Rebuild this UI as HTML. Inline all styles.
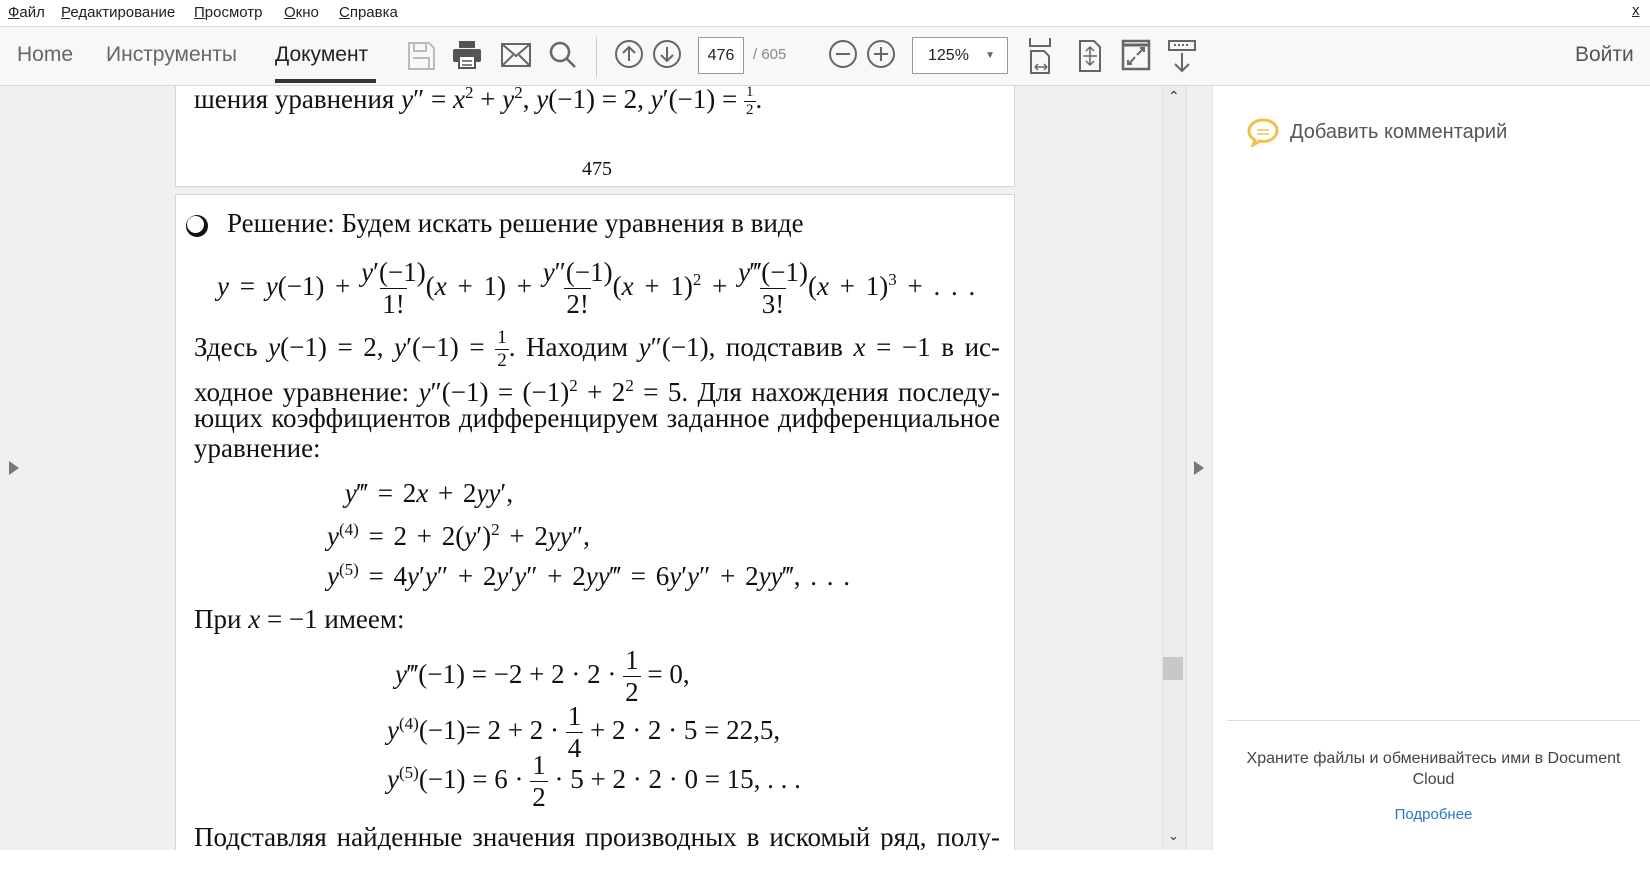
<!DOCTYPE html>
<html><head><meta charset="utf-8"><style>
*{margin:0;padding:0;box-sizing:border-box}
body{width:1650px;height:886px;position:relative;overflow:hidden;background:#fff;font-family:"Liberation Sans",sans-serif}
.a{position:absolute;white-space:nowrap}
.menu span{position:absolute;top:4px;font-size:15px;color:#222}
.menu span::first-letter{text-decoration:underline}
.tb{position:absolute;top:26px;left:0;width:1650px;height:60px;background:#f8f8f8;border-top:1px solid #d8d8d8;border-bottom:1px solid #d8d8d8}
.tab{position:absolute;top:16px;font-size:21px;color:#666}
.doc{position:absolute;top:86px;left:0;width:1212px;height:764px;background:#f0f0f0;overflow:hidden}
.page{position:absolute;left:175px;width:840px;background:#fff;border:1px solid #d4d4d4}
.t{position:absolute;font-family:"Liberation Serif",serif;font-size:27px;color:#111;white-space:nowrap;line-height:27px}
.w{word-spacing:4px}
.w3{word-spacing:3px}
i{font-style:italic}
.j{width:806px;text-align:justify;text-align-last:justify}
.fr{display:inline-flex;flex-direction:column;align-items:center;vertical-align:middle;line-height:1.15;word-spacing:0}
.fr>span:last-child{border-top:1.3px solid #111;padding:0 2px}
sup{font-size:17px;vertical-align:10px}
.sm{font-size:15px}
</style></head><body>
<div class="menu">
<span style="left:8px">Файл</span><span style="left:61px">Редактирование</span><span style="left:194px">Просмотр</span><span style="left:284px">Окно</span><span style="left:339px">Справка</span>
<span style="left:1632px;top:2px">x</span>
</div>
<div class="tb">
<span class="tab" style="left:17px">Home</span>
<span class="tab" style="left:106px">Инструменты</span>
<span class="tab" style="left:275px;color:#222">Документ</span>
<div class="a" style="left:275px;top:52px;width:101px;height:4px;background:#333"></div>
<svg class="a" style="left:405px;top:14px" width="32" height="30" viewBox="0 0 32 30" fill="none" stroke="#bbb" stroke-width="2"><path d="M4 2h20l5 5v21H4z"/><path d="M9 2v8h12V2M8 17h16v11"/></svg>
<svg class="a" style="left:451px;top:13px" width="32" height="30" viewBox="0 0 32 30" fill="#555"><rect x="8" y="1" width="16" height="7"/><rect x="2" y="9" width="28" height="13" rx="2"/><rect x="8" y="16" width="16" height="12" fill="#fff" stroke="#555" stroke-width="2"/><path d="M11 21h10M11 25h10" stroke="#555" stroke-width="1.5"/></svg>
<svg class="a" style="left:500px;top:15px" width="32" height="26" viewBox="0 0 32 26" fill="none" stroke="#666" stroke-width="2"><rect x="2" y="2" width="28" height="22"/><path d="M2 2l14 12 14-12M2 24l11-11M30 24L19 13"/></svg>
<svg class="a" style="left:548px;top:13px" width="30" height="30" viewBox="0 0 30 30" fill="none" stroke="#666" stroke-width="2.5"><circle cx="12" cy="12" r="9"/><path d="M19 19l8 8"/></svg>
<div class="a" style="left:596px;top:10px;width:1px;height:40px;background:#ccc"></div>
<svg class="a" style="left:614px;top:12px" width="30" height="30" viewBox="0 0 30 30" fill="none" stroke="#666" stroke-width="2"><circle cx="15" cy="15" r="13"/><path d="M15 22V8M9 14l6-6 6 6"/></svg>
<svg class="a" style="left:652px;top:12px" width="30" height="30" viewBox="0 0 30 30" fill="none" stroke="#666" stroke-width="2"><circle cx="15" cy="15" r="13"/><path d="M15 8v14M9 16l6 6 6-6"/></svg>
<div class="a" style="left:698px;top:10px;width:46px;height:37px;background:#fff;border:1px solid #999;font-size:16px;text-align:center;line-height:35px;color:#222">476</div>
<span class="a" style="left:753px;top:19px;font-size:15px;color:#888">/ 605</span>
<svg class="a" style="left:828px;top:12px" width="30" height="30" viewBox="0 0 30 30" fill="none" stroke="#666" stroke-width="2"><circle cx="15" cy="15" r="13"/><path d="M8 15h14"/></svg>
<svg class="a" style="left:866px;top:12px" width="30" height="30" viewBox="0 0 30 30" fill="none" stroke="#666" stroke-width="2"><circle cx="15" cy="15" r="13"/><path d="M8 15h14M15 8v14"/></svg>
<div class="a" style="left:912px;top:10px;width:96px;height:37px;background:#fff;border:1px solid #999;font-size:16px;line-height:35px;padding-left:15px;color:#222">125%<span style="position:absolute;right:12px;font-size:10px;color:#666">▼</span></div>
<svg class="a" style="left:1027px;top:10px" width="28" height="38" viewBox="0 0 28 38" fill="none" stroke="#666" stroke-width="2"><path d="M3 1v8h20V1M4 14h13l5 5v17H4z"/><path d="M8 30h12M8 30l3-3M8 30l3 3M20 30l-3-3M20 30l-3 3" stroke-width="1.5"/></svg>
<svg class="a" style="left:1078px;top:12px" width="24" height="34" viewBox="0 0 24 34" fill="none" stroke="#666" stroke-width="2"><path d="M2 2h14l6 6v24H2z"/><path d="M12 8v18M8 12l4-4 4 4M8 22l4 4 4-4M5 17h14" stroke-width="1.5"/></svg>
<svg class="a" style="left:1121px;top:12px" width="30" height="32" viewBox="0 0 30 32" fill="none" stroke="#666" stroke-width="2.5"><rect x="2" y="2" width="26" height="28"/><path d="M2 6h26" stroke-width="3"/><path d="M16 16l7-7M19 9h4v4M14 18l-6 7M7 21v4h4" stroke-width="2"/></svg>
<svg class="a" style="left:1167px;top:12px" width="30" height="34" viewBox="0 0 30 34" fill="none" stroke="#666" stroke-width="2"><rect x="2" y="2" width="26" height="9"/><path d="M7 6h2M11 6h2M15 6h2M19 6h2" stroke-width="2"/><path d="M15 14v18M8 25l7 7 7-7"/></svg>
<span class="tab" style="left:1575px;color:#555">Войти</span>
</div>

<div class="doc">
<svg class="a" style="left:9px;top:375px" width="10" height="14"><path d="M0 0l10 7-10 7z" fill="#777"/></svg>
<div class="page" style="top:-10px;height:111px">
<div class="t" style="left:18px;top:2px">шения уравнения <i>y</i>″ = <i>x</i><sup>2</sup> + <i>y</i><sup>2</sup>, <i>y</i>(−1) = 2, <i>y</i>′(−1) = <span class="fr sm"><span>1</span><span>2</span></span>.</div>
<div class="t" style="left:406px;top:79px;font-size:20px">475</div>
</div>
<div class="page" style="top:108px;height:700px">
<svg class="a" style="left:9px;top:19px" width="24" height="24"><circle cx="12" cy="12" r="11" fill="#111"/><circle cx="10.5" cy="10.5" r="8.5" fill="#fff"/></svg>
<div class="t" style="left:51px;top:15px">Решение: Будем искать решение уравнения в виде</div>
<div class="t w" style="left:41px;top:62px;line-height:30px"><i>y</i> = <i>y</i>(−1) + <span class="fr"><span><i>y</i>′(−1)</span><span>1!</span></span>(<i>x</i> + 1) + <span class="fr"><span><i>y</i>″(−1)</span><span>2!</span></span>(<i>x</i> + 1)<sup>2</sup> + <span class="fr"><span><i>y</i>‴(−1)</span><span>3!</span></span>(<i>x</i> + 1)<sup>3</sup> + . . .</div>
<div class="t j" style="left:18px;top:132px;line-height:40px;height:50px">Здесь <i>y</i>(−1) = 2, <i>y</i>′(−1) = <span class="fr" style="font-size:19px"><span>1</span><span>2</span></span>. Находим <i>y</i>″(−1), подставив <i>x</i> = −1 в ис-</div>
<div class="t j" style="left:18px;top:177px">ходное уравнение: <i>y</i>″(−1) = (−1)<sup>2</sup> + 2<sup>2</sup> = 5. Для нахождения последу-</div>
<div class="t j" style="left:18px;top:210px">ющих коэффициентов дифференцируем заданное дифференциальное</div>
<div class="t" style="left:18px;top:240px">уравнение:</div>
<div class="t w3" style="left:159px;top:285px">&nbsp;<i>y</i>‴ = 2<i>x</i> + 2<i>yy</i>′,</div>
<div class="t w3" style="left:151px;top:321px"><i>y</i><sup>(4)</sup> = 2 + 2(<i>y</i>′)<sup>2</sup> + 2<i>yy</i>″,</div>
<div class="t w3" style="left:151px;top:361px"><i>y</i><sup>(5)</sup> = 4<i>y</i>′<i>y</i>″ + 2<i>y</i>′<i>y</i>″ + 2<i>yy</i>‴ = 6<i>y</i>′<i>y</i>″ + 2<i>yy</i>‴, . . .</div>
<div class="t" style="left:18px;top:411px">При <i>x</i> = −1 имеем:</div>
<div class="t" style="left:219px;top:450px;line-height:50px"><i>y</i>‴(−1) = −2 + 2 · 2 · <span class="fr"><span>1</span><span>2</span></span> = 0,</div>
<div class="t" style="left:211px;top:504px;line-height:50px"><i>y</i><sup>(4)</sup>(−1)= 2 + 2 · <span class="fr"><span>1</span><span>4</span></span> + 2 · 2 · 5 = 22,5,</div>
<div class="t" style="left:211px;top:553px;line-height:50px"><i>y</i><sup>(5)</sup>(−1) = 6 · <span class="fr"><span>1</span><span>2</span></span> · 5 + 2 · 2 · 0 = 15, . . .</div>
<div class="t j" style="left:18px;top:629px">Подставляя найденные значения производных в искомый ряд, полу-</div>
</div>
<div class="a" style="left:1162px;top:0;width:24px;height:764px;background:#ececec;border-left:1px solid #e2e2e2"></div>
<div class="a" style="left:1168px;top:2px;font-size:14px;color:#333">⌃</div>
<div class="a" style="left:1163px;top:571px;width:20px;height:23px;background:#c8c8c8"></div>
<div class="a" style="left:1168px;top:742px;font-size:13px;color:#333">⌄</div>
<div class="a" style="left:1186px;top:0;width:1px;height:764px;background:#ddd"></div>
<svg class="a" style="left:1194px;top:375px" width="10" height="14"><path d="M0 0l10 7-10 7z" fill="#777"/></svg>
</div>
<div class="a" style="left:1212px;top:86px;width:1px;height:764px;background:#e4e4e4"></div>
<svg class="a" style="left:1246px;top:117px" width="34" height="30" viewBox="0 0 34 30"><path d="M17 3C9 3 3 8 3 14c0 4 2 7 6 9l-2 5 7-4c1 0 2 .5 3 .5 8 0 14-5 14-11S25 3 17 3z" fill="#fff" stroke="#f3c14a" stroke-width="3"/><path d="M11 13h12M11 17h12" stroke="#f3c14a" stroke-width="1.5"/></svg>
<div class="a" style="left:1290px;top:121px;font-size:20px;color:#555">Добавить комментарий</div>
<div class="a" style="left:1227px;top:720px;width:413px;height:1px;background:#ddd"></div>
<div class="a" style="left:1227px;top:748px;width:413px;text-align:center;white-space:normal;font-size:16px;line-height:21px;color:#444">Храните файлы и обменивайтесь ими в Document Cloud</div>
<div class="a" style="left:1227px;top:806px;width:413px;text-align:center;font-size:15px;color:#2b74c9">Подробнее</div>
</body></html>
